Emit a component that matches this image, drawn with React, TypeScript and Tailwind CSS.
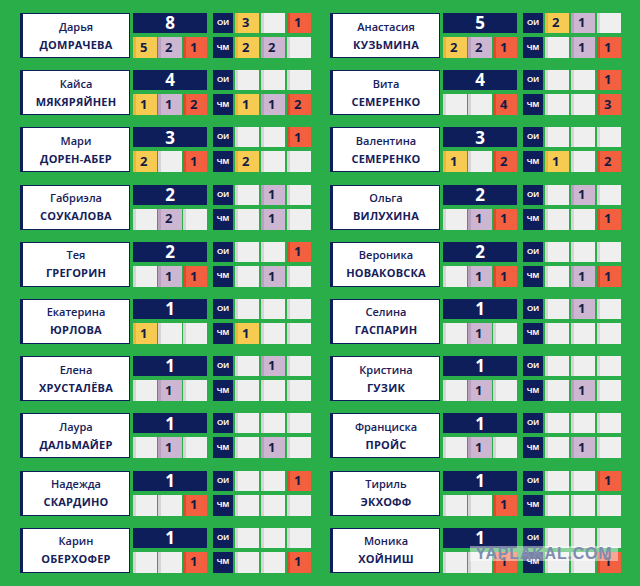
type Row = (number | null)[];

type Athlete = {
  first: string;
  last: string;
  total: number;
  medals: Row;
  oi: Row;
  wc: Row;
};

const left: Athlete[] = [
  { first: "Дарья", last: "ДОМРАЧЕВА", total: 8, medals: [5, 2, 1], oi: [3, null, 1], wc: [2, 2, null] },
  { first: "Кайса", last: "МЯКЯРЯЙНЕН", total: 4, medals: [1, 1, 2], oi: [null, null, null], wc: [1, 1, 2] },
  { first: "Мари", last: "ДОРЕН-АБЕР", total: 3, medals: [2, null, 1], oi: [null, null, 1], wc: [2, null, null] },
  { first: "Габриэла", last: "СОУКАЛОВА", total: 2, medals: [null, 2, null], oi: [null, 1, null], wc: [null, 1, null] },
  { first: "Тея", last: "ГРЕГОРИН", total: 2, medals: [null, 1, 1], oi: [null, null, 1], wc: [null, 1, null] },
  { first: "Екатерина", last: "ЮРЛОВА", total: 1, medals: [1, null, null], oi: [null, null, null], wc: [1, null, null] },
  { first: "Елена", last: "ХРУСТАЛЁВА", total: 1, medals: [null, 1, null], oi: [null, 1, null], wc: [null, null, null] },
  { first: "Лаура", last: "ДАЛЬМАЙЕР", total: 1, medals: [null, 1, null], oi: [null, null, null], wc: [null, 1, null] },
  { first: "Надежда", last: "СКАРДИНО", total: 1, medals: [null, null, 1], oi: [null, null, 1], wc: [null, null, null] },
  { first: "Карин", last: "ОБЕРХОФЕР", total: 1, medals: [null, null, 1], oi: [null, null, null], wc: [null, null, 1] },
];

const right: Athlete[] = [
  { first: "Анастасия", last: "КУЗЬМИНА", total: 5, medals: [2, 2, 1], oi: [2, 1, null], wc: [null, 1, 1] },
  { first: "Вита", last: "СЕМЕРЕНКО", total: 4, medals: [null, null, 4], oi: [null, null, 1], wc: [null, null, 3] },
  { first: "Валентина", last: "СЕМЕРЕНКО", total: 3, medals: [1, null, 2], oi: [null, null, null], wc: [1, null, 2] },
  { first: "Ольга", last: "ВИЛУХИНА", total: 2, medals: [null, 1, 1], oi: [null, 1, null], wc: [null, null, 1] },
  { first: "Вероника", last: "НОВАКОВСКА", total: 2, medals: [null, 1, 1], oi: [null, null, null], wc: [null, 1, 1] },
  { first: "Селина", last: "ГАСПАРИН", total: 1, medals: [null, 1, null], oi: [null, 1, null], wc: [null, null, null] },
  { first: "Кристина", last: "ГУЗИК", total: 1, medals: [null, 1, null], oi: [null, null, null], wc: [null, 1, null] },
  { first: "Франциска", last: "ПРОЙС", total: 1, medals: [null, 1, null], oi: [null, null, null], wc: [null, 1, null] },
  { first: "Тириль", last: "ЭКХОФФ", total: 1, medals: [null, null, 1], oi: [null, null, 1], wc: [null, null, null] },
  { first: "Моника", last: "ХОЙНИШ", total: 1, medals: [null, null, 1], oi: [null, null, null], wc: [null, null, 1] },
];

// gold / silver / bronze by column, grey when empty
const filled = [
  "bg-[#f7cb52] border-[#e9b73c]",
  "bg-[#cdb6d2] border-[#b9a0bf]",
  "bg-[#f2603f] border-[#de4a2b]",
];

const Cell = ({ value, idx, h }: { value: number | null; idx: number; h: string }) => (
  <div
    className={`w-[24px] ${h} border-l-[3px] flex items-center pl-[4px] text-[13px] font-bold text-[#141c45] ${
      value === null ? "bg-[#efefef] border-[#d5d5d5]" : filled[idx]
    }`}
  >
    {value}
  </div>
);

const Label = ({ text, h }: { text: string; h: string }) => (
  <div
    className={`w-[20px] ${h} bg-[#0e1e5b] text-white text-[8px] font-bold flex items-center justify-center`}
    style={{ fontFamily: '"Liberation Sans", Arial, sans-serif' }}
  >
    {text}
  </div>
);

const Card = ({ a }: { a: Athlete }) => (
  <div className="flex h-[45px]">
    <div className="w-[110px] h-[45px] bg-white border border-[#0e1e5b] border-l-[3px] flex flex-col items-center justify-center text-[#16205a] leading-[18px]">
      <span className="text-[11px] font-semibold">{a.first}</span>
      <span className="text-[11px] font-bold tracking-[0.2px]">{a.last}</span>
    </div>

    <div className="ml-[3px] w-[74px] flex flex-col gap-[4px]">
      <div className="h-[20px] bg-[#0e1e5b] text-white text-[17px] font-bold flex items-center justify-center">
        {a.total}
      </div>
      <div className="flex gap-[1px]">
        {a.medals.map((v, i) => (
          <Cell key={i} value={v} idx={i} h="h-[21px]" />
        ))}
      </div>
    </div>

    <div className="ml-[6px] flex flex-col gap-[4px]">
      <Label text="ОИ" h="h-[20px]" />
      <Label text="ЧМ" h="h-[21px]" />
    </div>

    <div className="ml-[2px] flex flex-col gap-[4px]">
      <div className="flex gap-[2px]">
        {a.oi.map((v, i) => (
          <Cell key={i} value={v} idx={i} h="h-[20px]" />
        ))}
      </div>
      <div className="flex gap-[2px]">
        {a.wc.map((v, i) => (
          <Cell key={i} value={v} idx={i} h="h-[21px]" />
        ))}
      </div>
    </div>
  </div>
);

export default function App() {
  return (
    <div
      className="relative w-[640px] h-[586px] bg-[#2aae4a] flex gap-[19px] pl-[20px] pt-[13px] overflow-hidden"
      style={{ fontFamily: '"Open Sans", "Noto Sans", sans-serif' }}
    >
      <div className="flex flex-col gap-[12.2px]">
        {left.map((a) => (
          <Card key={a.last + a.first} a={a} />
        ))}
      </div>
      <div className="flex flex-col gap-[12.2px]">
        {right.map((a) => (
          <Card key={a.last + a.first} a={a} />
        ))}
      </div>

      {/* watermark */}
      <div className="absolute left-[470px] top-[546px] w-[148px] h-[15px] bg-white/45 flex items-center justify-center">
        <span
          className="text-[16px] font-bold tracking-[0.8px] text-[#7f8cb0] leading-none"
          style={{ fontFamily: '"Liberation Sans", Arial, sans-serif' }}
        >
          YAPLAKAL.COM
        </span>
      </div>
    </div>
  );
}
